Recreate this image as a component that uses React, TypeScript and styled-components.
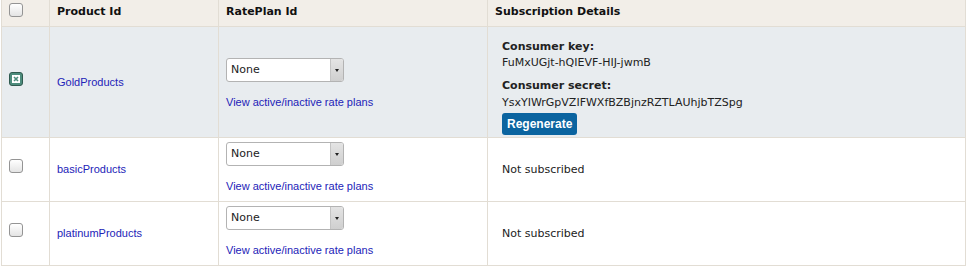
import React from "react";
import styled, { createGlobalStyle } from "styled-components";

const Global = createGlobalStyle`
  html, body { margin: 0; padding: 0; background: #fff; }
  body { font-family: "DejaVu Sans", Verdana, sans-serif; font-size: 11px; color: #222; }
`;

const Table = styled.table`
  border-collapse: collapse;
  table-layout: fixed;
  width: 965px;
  margin-left: 1px;
`;

const HeadCell = styled.th<{ $compact?: boolean }>`
  background: #f2eee8;
  border: 1px solid #e2ddd4;
  border-top: none;
  text-align: left;
  font-weight: bold;
  font-size: 11px;
  line-height: 14px;
  padding: ${(p) => (p.$compact ? "0 7px" : "5px 7px 7px")};
  vertical-align: middle;
  color: #111;
`;

const Row = styled.tr<{ $active?: boolean }>`
  background: ${(p) => (p.$active ? "#e8ecef" : "#fff")};
`;

const Cell = styled.td<{ $indent?: number; $top?: number }>`
  border: 1px solid #e2ddd4;
  padding: ${(p) => p.$top ?? 4}px 7px 4px ${(p) => p.$indent ?? 7}px;
  vertical-align: middle;
  line-height: 14px;
`;

const Box = styled.span<{ $checked?: boolean }>`
  width: 12px;
  height: 12px;
  margin-bottom: 7px;
  border-radius: 3px;
  border: 1px solid ${(p) => (p.$checked ? "#2f5a4f" : "#949494")};
  background: ${(p) =>
    p.$checked ? "#4d8c7c" : "linear-gradient(#ffffff, #e4e4e4)"};
  display: flex;
  align-items: center;
  justify-content: center;
`;

const Link = styled.a`
  font-family: "Liberation Sans", Arial, sans-serif;
  font-size: 11px;
  color: #2323b8;
  text-decoration: none;
`;

const SelectBox = styled.div`
  width: 116px;
  height: 22px;
  border: 1px solid #b3b3b3;
  border-radius: 3px;
  background: #fff;
  display: flex;
  align-items: stretch;
  overflow: hidden;
  box-sizing: content-box;
`;

const SelectText = styled.span`
  flex: 1;
  padding-left: 4px;
  line-height: 22px;
  color: #222;
`;

const SelectArrow = styled.span`
  width: 12px;
  border-left: 1px solid #c4c4c4;
  background: linear-gradient(#e4e4e4, #cfcfcf);
  display: flex;
  align-items: center;
  justify-content: center;
  &::after {
    content: "";
    border-left: 2.5px solid transparent;
    border-right: 2.5px solid transparent;
    border-top: 3px solid #222;
  }
`;

const PlanLink = styled.div`
  font-family: "Liberation Sans", Arial, sans-serif;
  margin: 13px 0 4px;
  line-height: 14px;
`;

const Details = styled.div`
  padding: 9px 0 0;
  margin-bottom: -2px;
`;

const Label = styled.div<{ $gap?: number }>`
  font-weight: bold;
  margin-top: ${(p) => p.$gap ?? 0}px;
`;

const Value = styled.div<{ $gap?: number }>`
  margin-top: ${(p) => p.$gap ?? 2}px;
`;

const Button = styled.button`
  margin-top: 3px;
  display: block;
  height: 22px;
  padding: 0 5px;
  border: none;
  border-radius: 3px;
  background: #0b64a0;
  color: #fff;
  font-family: "Liberation Sans", Arial, sans-serif;
  font-weight: bold;
  font-size: 12px;
`;

function Check({ checked }: { checked?: boolean }) {
  return (
    <Box $checked={checked}>
      {checked && (
        <svg width="8" height="8" viewBox="0 0 8 8">
          <rect x="0" y="0" width="8" height="8" fill="#fff" />
          <path d="M2 2 L6 6 M6 2 L2 6" stroke="#4d8c7c" strokeWidth="1.6" />
        </svg>
      )}
    </Box>
  );
}

function RatePlan() {
  return (
    <>
      <SelectBox>
        <SelectText>None</SelectText>
        <SelectArrow />
      </SelectBox>
      <PlanLink>
        <Link href="#">View active/inactive rate plans</Link>
      </PlanLink>
    </>
  );
}

const products = [
  { name: "GoldProducts", subscribed: true },
  { name: "basicProducts", subscribed: false },
  { name: "platinumProducts", subscribed: false },
];

export default function App() {
  return (
    <>
      <Global />
      <Table>
        <colgroup>
          <col style={{ width: 48 }} />
          <col style={{ width: 169 }} />
          <col style={{ width: 269 }} />
          <col />
        </colgroup>
        <thead>
          <tr>
            <HeadCell $compact>
              <Check />
            </HeadCell>
            <HeadCell>Product Id</HeadCell>
            <HeadCell>RatePlan Id</HeadCell>
            <HeadCell>Subscription Details</HeadCell>
          </tr>
        </thead>
        <tbody>
          {products.map((p) => (
            <Row key={p.name} $active={p.subscribed}>
              <Cell>
                <Check checked={p.subscribed} />
              </Cell>
              <Cell>
                <Link href="#">{p.name}</Link>
              </Cell>
              <Cell $top={p.subscribed ? 11 : 4}>
                <RatePlan />
              </Cell>
              <Cell $indent={14}>
                {p.subscribed ? (
                  <Details>
                    <Label>Consumer key:</Label>
                    <Value>FuMxUGjt-hQIEVF-HIJ-jwmB</Value>
                    <Label $gap={9}>Consumer secret:</Label>
                    <Value $gap={3}>YsxYIWrGpVZIFWXfBZBjnzRZTLAUhjbTZSpg</Value>
                    <Button>Regenerate</Button>
                  </Details>
                ) : (
                  "Not subscribed"
                )}
              </Cell>
            </Row>
          ))}
        </tbody>
      </Table>
    </>
  );
}
